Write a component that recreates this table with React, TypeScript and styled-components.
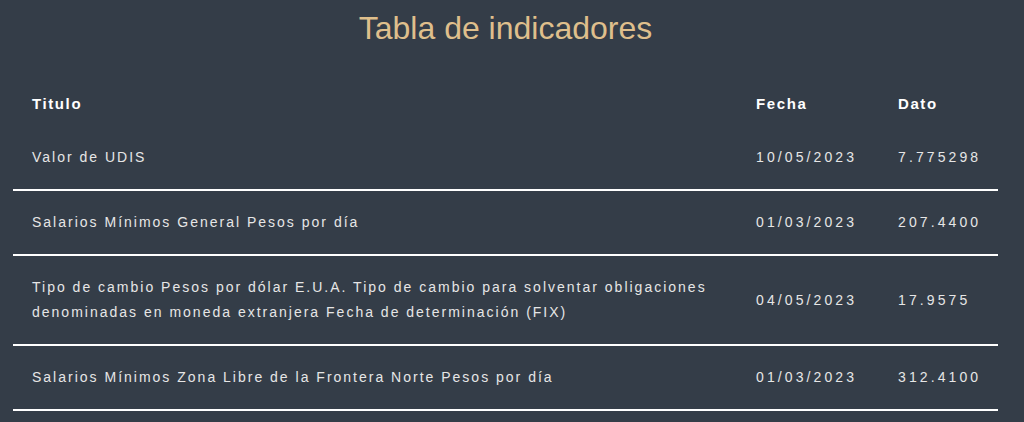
import React from 'react';
import styled, { createGlobalStyle } from 'styled-components';

const GlobalStyle = createGlobalStyle`
  html, body {
    margin: 0;
    padding: 0;
    background: #343d48;
  }
`;

const Page = styled.div`
  padding: 0 26px 0 13px;
  font-family: 'Liberation Sans', Arial, sans-serif;
  color: #e6e6e6;
`;

const Heading = styled.h1`
  margin: 0;
  padding-top: 10px;
  height: 82px;
  box-sizing: border-box;
  text-align: center;
  font-size: 32px;
  line-height: 36px;
  font-weight: normal;
  color: #dfbf8c;
`;

const Table = styled.table`
  width: 100%;
  border-collapse: collapse;
  table-layout: fixed;
`;

const HeadCell = styled.th`
  text-align: left;
  padding: 10px 19px;
  line-height: 24px;
  font-size: 15px;
  font-weight: bold;
  letter-spacing: 1.6px;
  color: #ffffff;
`;

const Row = styled.tr`
  border-bottom: 2px solid #ffffff;
`;

const Cell = styled.td<{ $numeric?: boolean }>`
  padding: 19px;
  line-height: 25px;
  font-size: 14px;
  letter-spacing: ${(p) => (p.$numeric ? '3.1px' : '2px')};
  vertical-align: middle;
  white-space: ${(p) => (p.$numeric ? 'nowrap' : 'normal')};
`;

const indicadores = [
  { titulo: 'Valor de UDIS', fecha: '10/05/2023', dato: '7.775298' },
  {
    titulo: 'Salarios Mínimos General Pesos por día',
    fecha: '01/03/2023',
    dato: '207.4400',
  },
  {
    titulo:
      'Tipo de cambio Pesos por dólar E.U.A. Tipo de cambio para solventar obligaciones denominadas en moneda extranjera Fecha de determinación (FIX)',
    fecha: '04/05/2023',
    dato: '17.9575',
  },
  {
    titulo: 'Salarios Mínimos Zona Libre de la Frontera Norte Pesos por día',
    fecha: '01/03/2023',
    dato: '312.4100',
  },
];

export default function App() {
  return (
    <Page>
      <GlobalStyle />
      <Heading>Tabla de indicadores</Heading>
      <Table>
        <colgroup>
          <col style={{ width: 724 }} />
          <col style={{ width: 142 }} />
          <col />
        </colgroup>
        <thead>
          <tr>
            <HeadCell>Titulo</HeadCell>
            <HeadCell>Fecha</HeadCell>
            <HeadCell>Dato</HeadCell>
          </tr>
        </thead>
        <tbody>
          {indicadores.map((item, idx) => (
            <Row key={idx}>
              <Cell>{item.titulo}</Cell>
              <Cell $numeric>{item.fecha}</Cell>
              <Cell $numeric>{item.dato}</Cell>
            </Row>
          ))}
        </tbody>
      </Table>
    </Page>
  );
}
